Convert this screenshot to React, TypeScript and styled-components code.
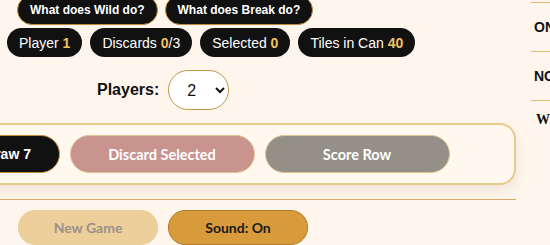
import React from "react";
import styled, { createGlobalStyle } from "styled-components";

const GlobalStyle = createGlobalStyle`
  html, body {
    margin: 0;
    padding: 0;
    background: #fef6ec;
    overflow: hidden;
  }
  body {
    font-family: "Liberation Sans", Arial, sans-serif;
  }
`;

const Page = styled.div`
  display: flex;
  width: 550px;
  height: 245px;
  overflow: hidden;
`;

const Main = styled.div`
  flex: none;
  width: 626px;
  margin-left: -110px;
  display: flex;
  flex-direction: column;
`;

const HelpRow = styled.div`
  display: flex;
  gap: 7px;
  padding-left: 127px;
  margin-top: -5px;
`;

const HelpPill = styled.button`
  height: 30px;
  padding: 0 12px;
  border-radius: 15px;
  border: 1px solid #c08a3a;
  background: #111;
  color: #fff;
  font-family: "Liberation Sans", Arial, sans-serif;
  font-weight: 700;
  font-size: 12px;
`;

const StatRow = styled.div`
  display: flex;
  gap: 8px;
  padding-left: 117px;
  margin-top: 3px;
`;

const StatPill = styled.div`
  height: 29px;
  padding: 0 12px;
  border-radius: 15px;
  background: #111;
  color: #fff;
  font-size: 14px;
  display: flex;
  align-items: center;
  white-space: pre;
`;

const Num = styled.span`
  color: #f2c262;
  font-weight: 700;
`;

const PlayersRow = styled.div`
  display: flex;
  align-items: center;
  gap: 9px;
  padding-left: 207px;
  margin-top: 13px;
`;

const Label = styled.label`
  font-weight: 700;
  font-size: 16px;
  color: #111;
`;

const Select = styled.select`
  width: 61px;
  height: 40px;
  border-radius: 20px;
  border: 1px solid #c4954a;
  background: #fff;
  font-family: "Liberation Sans", Arial, sans-serif;
  font-size: 16px;
  color: #111;
  padding: 0 6px 0 14px;
`;

const Panel = styled.div`
  margin-top: 13px;
  height: 62px;
  border: 2px solid #e8c98e;
  border-radius: 16px;
  background: #fff8ef;
  box-shadow: 0 6px 12px rgba(120, 90, 40, 0.1);
  display: flex;
  align-items: center;
  justify-content: center;
  gap: 10px;
`;

const ActionButton = styled.button<{ $tone: "dark" | "rose" | "grey" }>`
  height: 38px;
  border-radius: 19px;
  font-weight: 700;
  color: #fff;
  ${(p) =>
    p.$tone === "dark"
      ? `
    width: 103px;
    font-size: 14px;
    background: #111;
    border: 1px solid #c08a3a;
    font-family: "Liberation Sans", Arial, sans-serif;
  `
      : `
    width: 185px;
    font-size: 14.5px;
    font-family: Lato, "Liberation Sans", sans-serif;
    border: 1px solid #e2c28e;
    background: ${p.$tone === "rose" ? "#c9948e" : "#948f87"};
  `}
`;

const Divider = styled.div`
  margin-top: 14px;
  border-top: 1px solid #d8aa68;
`;

const FooterRow = styled.div`
  display: flex;
  gap: 10px;
  padding-left: 128px;
  margin-top: 10px;
`;

const FooterButton = styled.button<{ $on?: boolean }>`
  width: 140px;
  height: 35px;
  border-radius: 17px;
  font-family: Lato, "Liberation Sans", sans-serif;
  font-weight: 700;
  font-size: 14px;
  border: 1px solid ${(p) => (p.$on ? "#b67c2c" : "#ead0a0")};
  background: ${(p) => (p.$on ? "#d89b3c" : "#edcf9c")};
  color: ${(p) => (p.$on ? "#1a1a1a" : "#9a9088")};
`;

const Side = styled.div`
  flex: none;
  margin-left: 15px;
  width: 80px;
  display: flex;
  flex-direction: column;
  margin-top: 2px;
`;

const SideItem = styled.div<{ $serif?: boolean }>`
  height: 48px;
  border-top: 1px solid #e0b878;
  display: flex;
  align-items: center;
  padding-left: 3px;
  font-weight: 700;
  font-size: 14px;
  color: #111;
  font-family: ${(p) =>
    p.$serif ? `"Liberation Serif", serif` : `"Liberation Sans", Arial, sans-serif`};
  ${(p) => (p.$serif ? "align-items: flex-start; padding-top: 11px; padding-left: 5px;" : "")}
`;

export default function App() {
  return (
    <>
      <GlobalStyle />
      <Page>
        <Main>
          <HelpRow>
            <HelpPill>What does Wild do?</HelpPill>
            <HelpPill>What does Break do?</HelpPill>
          </HelpRow>
          <StatRow>
            <StatPill>
              Player <Num>1</Num>
            </StatPill>
            <StatPill>
              Discards <Num>0</Num>/3
            </StatPill>
            <StatPill>
              Selected <Num>0</Num>
            </StatPill>
            <StatPill>
              Tiles in Can <Num>40</Num>
            </StatPill>
          </StatRow>
          <PlayersRow>
            <Label htmlFor="players">Players:</Label>
            <Select id="players" defaultValue="2">
              <option value="2">2</option>
              <option value="3">3</option>
              <option value="4">4</option>
            </Select>
          </PlayersRow>
          <Panel>
            <ActionButton $tone="dark">Draw 7</ActionButton>
            <ActionButton $tone="rose">Discard Selected</ActionButton>
            <ActionButton $tone="grey">Score Row</ActionButton>
          </Panel>
          <Divider />
          <FooterRow>
            <FooterButton disabled>New Game</FooterButton>
            <FooterButton $on>Sound: On</FooterButton>
          </FooterRow>
        </Main>
        <Side>
          <SideItem>ONE</SideItem>
          <SideItem>NONE</SideItem>
          <SideItem $serif>WILD</SideItem>
        </Side>
      </Page>
    </>
  );
}
